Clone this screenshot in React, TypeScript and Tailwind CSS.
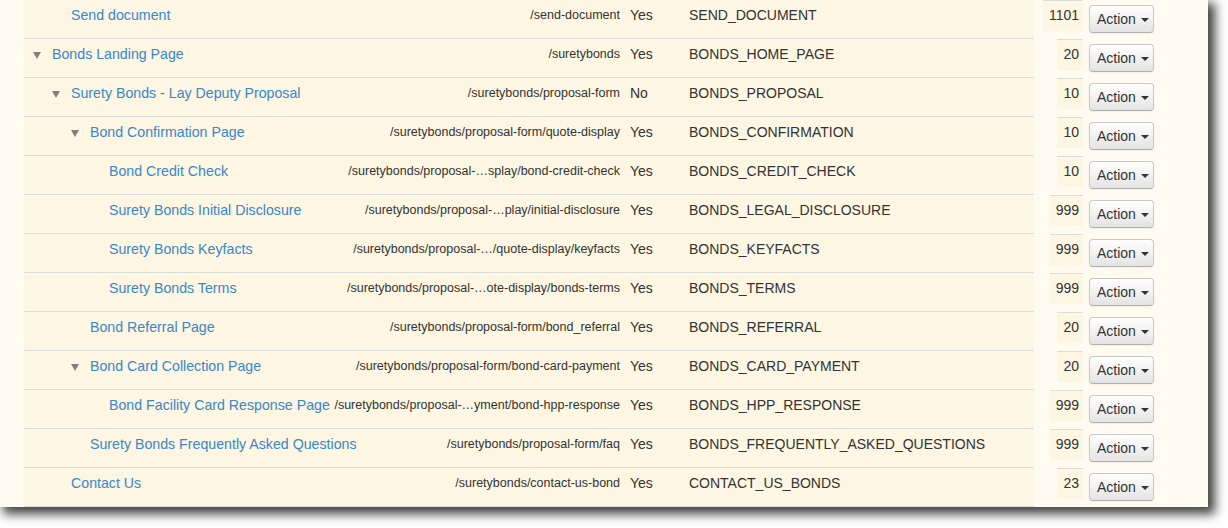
import React from "react";

type Row = {
  name: string;
  level: number;
  open?: boolean;
  path: string;
  live: string;
  code: string;
  order: string;
};

const rows: Row[] = [
  { name: "Send document", level: 1, path: "/send-document", live: "Yes", code: "SEND_DOCUMENT", order: "1101" },
  { name: "Bonds Landing Page", level: 0, open: true, path: "/suretybonds", live: "Yes", code: "BONDS_HOME_PAGE", order: "20" },
  { name: "Surety Bonds - Lay Deputy Proposal", level: 1, open: true, path: "/suretybonds/proposal-form", live: "No", code: "BONDS_PROPOSAL", order: "10" },
  { name: "Bond Confirmation Page", level: 2, open: true, path: "/suretybonds/proposal-form/quote-display", live: "Yes", code: "BONDS_CONFIRMATION", order: "10" },
  { name: "Bond Credit Check", level: 3, path: "/suretybonds/proposal-…splay/bond-credit-check", live: "Yes", code: "BONDS_CREDIT_CHECK", order: "10" },
  { name: "Surety Bonds Initial Disclosure", level: 3, path: "/suretybonds/proposal-…play/initial-disclosure", live: "Yes", code: "BONDS_LEGAL_DISCLOSURE", order: "999" },
  { name: "Surety Bonds Keyfacts", level: 3, path: "/suretybonds/proposal-…/quote-display/keyfacts", live: "Yes", code: "BONDS_KEYFACTS", order: "999" },
  { name: "Surety Bonds Terms", level: 3, path: "/suretybonds/proposal-…ote-display/bonds-terms", live: "Yes", code: "BONDS_TERMS", order: "999" },
  { name: "Bond Referral Page", level: 2, path: "/suretybonds/proposal-form/bond_referral", live: "Yes", code: "BONDS_REFERRAL", order: "20" },
  { name: "Bond Card Collection Page", level: 2, open: true, path: "/suretybonds/proposal-form/bond-card-payment", live: "Yes", code: "BONDS_CARD_PAYMENT", order: "20" },
  { name: "Bond Facility Card Response Page", level: 3, path: "/suretybonds/proposal-…yment/bond-hpp-response", live: "Yes", code: "BONDS_HPP_RESPONSE", order: "999" },
  { name: "Surety Bonds Frequently Asked Questions", level: 2, path: "/suretybonds/proposal-form/faq", live: "Yes", code: "BONDS_FREQUENTLY_ASKED_QUESTIONS", order: "999" },
  { name: "Contact Us", level: 1, path: "/suretybonds/contact-us-bond", live: "Yes", code: "CONTACT_US_BONDS", order: "23" },
  { name: "", level: 1, path: "", live: "", code: "", order: "" },
];

function ActionButton() {
  return (
    <button className="flex h-[28px] w-[65px] items-center rounded-[4px] border border-[#c8c8c8] border-b-[#b0b0b0] bg-gradient-to-b from-white to-[#e4e4e4] pl-[7px] text-[14px] text-[#333] shadow-[inset_0_1px_0_rgba(255,255,255,0.3),0_1px_2px_rgba(0,0,0,0.05)]">
      Action
      <span className="ml-[5px] mt-[2px] h-0 w-0 border-x-[4px] border-t-[4px] border-x-transparent border-t-[#333]" />
    </button>
  );
}

function TreeRow({ row }: { row: Row }) {
  return (
    <div className="flex h-[39px]">
      <div className="flex w-[1010px] border-b border-[#dcdcdc] bg-[#fcf6e3] pt-[5px] leading-[20px]">
        <div className="flex w-[310px] shrink-0 whitespace-nowrap" style={{ paddingLeft: 9 + 19 * row.level }}>
          <span className="flex w-[19px] shrink-0 pt-[8px]">
            {row.open && <span className="h-0 w-0 border-x-[4px] border-t-[7px] border-x-transparent border-t-[#808080]" />}
          </span>
          <span className="text-[14.2px] text-[#3a87c9]">{row.name}</span>
        </div>
        <div className="flex w-[296px] shrink-0 justify-end whitespace-nowrap pr-[10px] text-[12.5px] text-[#333]">{row.path}</div>
        <div className="w-[59px] shrink-0 text-[14px] text-[#333]">{row.live}</div>
        <div className="flex-1 whitespace-nowrap text-[14px] text-[#333]">{row.code}</div>
      </div>
      <div className="flex w-[49px] justify-end">
        <div className="h-[31px] border-t border-[#dcdcdc] bg-[#fcf6e3] pl-[6px] pr-[4px] pt-[4px] text-[14px] leading-[20px] text-[#333]">
          {row.order}
        </div>
      </div>
      <div className="ml-[6px] pt-[5px]">{row.name !== "" && <ActionButton />}</div>
    </div>
  );
}

export default function App() {
  return (
    <div className="h-[528px] w-[1228px] overflow-hidden bg-white font-['Liberation_Sans',Arial,sans-serif]">
      <div className="h-[507px] w-[1208px] overflow-hidden bg-[#fffbf1] pl-[24px] shadow-[5px_5px_10px_2px_rgba(0,0,0,0.75)]">
        {rows.map((row, i) => (
          <TreeRow key={i} row={row} />
        ))}
      </div>
    </div>
  );
}
